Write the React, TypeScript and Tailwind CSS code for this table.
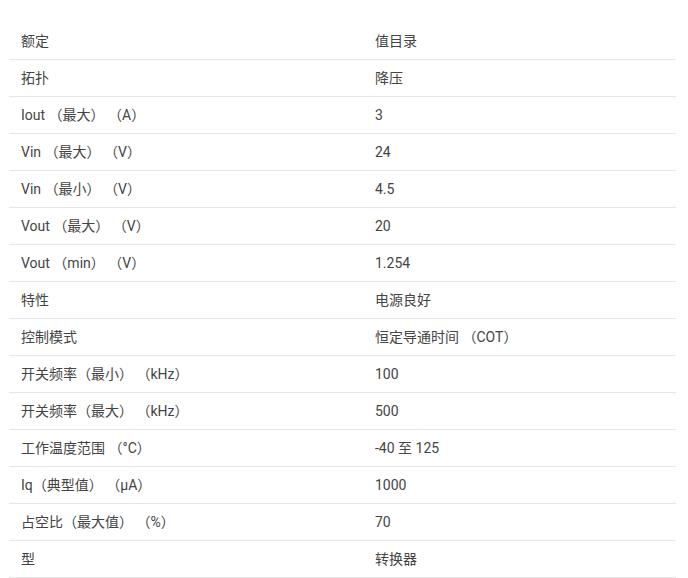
import React from 'react';

const rows: [string, string][] = [
  ['额定', '值目录'],
  ['拓扑', '降压'],
  ['Iout （最大） （A）', '3'],
  ['Vin （最大） （V）', '24'],
  ['Vin （最小） （V）', '4.5'],
  ['Vout （最大） （V）', '20'],
  ['Vout （min） （V）', '1.254'],
  ['特性', '电源良好'],
  ['控制模式', '恒定导通时间 （COT）'],
  ['开关频率（最小） （kHz）', '100'],
  ['开关频率（最大） （kHz）', '500'],
  ['工作温度范围 （°C）', '-40 至 125'],
  ['Iq（典型值） （μA）', '1000'],
  ['占空比（最大值） （%）', '70'],
  ['型', '转换器'],
];

const App = () => {
  return (
    <div
      className="w-[688px] h-[578px] bg-white pt-[23px] pl-[9px] text-[14px] text-[#444]"
      style={{ fontFamily: 'Roboto, "Noto Sans CJK SC", sans-serif' }}
    >
      <div className="w-[667px]">
        {rows.map(([label, value], i) => (
          <div key={i} className="flex items-center h-[37px] border-b border-[#e6e6e6]">
            <div className="w-[354px] pl-3 whitespace-nowrap">{label}</div>
            <div className="pl-3 whitespace-nowrap">{value}</div>
          </div>
        ))}
      </div>
    </div>
  );
};

export default App;
